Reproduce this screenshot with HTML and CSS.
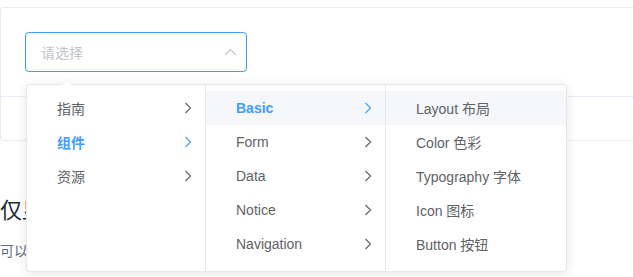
FILE: index.html
```
<!DOCTYPE html>
<html lang="zh-CN">
<head>
    <meta charset="UTF-8">
    <title>Cascader 级联选择器</title>
    <link rel="stylesheet" href="styles.css">
</head>
<body>
    <div class="page">
        <div class="demo-block">
            <div class="source">
                <div class="cascader">
                    <div class="cascader-input">
                        <span class="placeholder">请选择</span>
                        <svg class="caret" width="14" height="14" viewBox="0 0 14 14">
                            <path d="M2 10 L7.5 4.5 L13 10" fill="none" stroke="currentColor" stroke-width="1.1"/>
                        </svg>
                    </div>

                    <!-- dropdown panel -->
                    <div class="cascader-panel">
                        <span class="popper-arrow"></span>

                        <ul class="cascader-menu">
                            <li class="node"><span class="label">指南</span><svg class="postfix" width="14" height="14" viewBox="0 0 14 14"><path d="M4.5 2 L9.5 7 L4.5 12" fill="none" stroke="currentColor" stroke-width="1.1"/></svg></li>
                            <li class="node in-path"><span class="label">组件</span><svg class="postfix" width="14" height="14" viewBox="0 0 14 14"><path d="M4.5 2 L9.5 7 L4.5 12" fill="none" stroke="currentColor" stroke-width="1.1"/></svg></li>
                            <li class="node"><span class="label">资源</span><svg class="postfix" width="14" height="14" viewBox="0 0 14 14"><path d="M4.5 2 L9.5 7 L4.5 12" fill="none" stroke="currentColor" stroke-width="1.1"/></svg></li>
                        </ul>

                        <ul class="cascader-menu">
                            <li class="node in-path hovered"><span class="label">Basic</span><svg class="postfix" width="14" height="14" viewBox="0 0 14 14"><path d="M4.5 2 L9.5 7 L4.5 12" fill="none" stroke="currentColor" stroke-width="1.1"/></svg></li>
                            <li class="node"><span class="label">Form</span><svg class="postfix" width="14" height="14" viewBox="0 0 14 14"><path d="M4.5 2 L9.5 7 L4.5 12" fill="none" stroke="currentColor" stroke-width="1.1"/></svg></li>
                            <li class="node"><span class="label">Data</span><svg class="postfix" width="14" height="14" viewBox="0 0 14 14"><path d="M4.5 2 L9.5 7 L4.5 12" fill="none" stroke="currentColor" stroke-width="1.1"/></svg></li>
                            <li class="node"><span class="label">Notice</span><svg class="postfix" width="14" height="14" viewBox="0 0 14 14"><path d="M4.5 2 L9.5 7 L4.5 12" fill="none" stroke="currentColor" stroke-width="1.1"/></svg></li>
                            <li class="node"><span class="label">Navigation</span><svg class="postfix" width="14" height="14" viewBox="0 0 14 14"><path d="M4.5 2 L9.5 7 L4.5 12" fill="none" stroke="currentColor" stroke-width="1.1"/></svg></li>
                        </ul>

                        <ul class="cascader-menu">
                            <li class="node hovered"><span class="label">Layout 布局</span></li>
                            <li class="node"><span class="label">Color 色彩</span></li>
                            <li class="node"><span class="label">Typography 字体</span></li>
                            <li class="node"><span class="label">Icon 图标</span></li>
                            <li class="node"><span class="label">Button 按钮</span></li>
                        </ul>
                    </div>
                </div>
            </div>
            <div class="demo-control"></div>
        </div>

        <h3>仅显示最后一级</h3>
        <p>可以仅在输入框中显示选中项最后一级的标签，而不是选中项所在的完整路径。</p>
    </div>
</body>
</html>
```

FILE: styles.css
```
html,
body {
    height: 100%;
}
body {
    margin: 0;
    overflow: hidden;
    font-family: 'Liberation Sans', 'Noto Sans CJK SC', sans-serif;
    font-size: 14px;
    color: #606266;
    background-color: #ffffff;
}
.page {
    min-height: 277px;
    padding-top: 7px;
    box-sizing: border-box;
}
.demo-block {
    margin-right: -20px;
    border: 1px solid #ebebeb;
    border-radius: 3px;
}
.source {
    padding: 24px;
}
.demo-control {
    height: 43px;
    border-top: 1px solid #eaeefb;
}
.cascader {
    position: relative;
    width: 222px;
}
.cascader-input {
    display: flex;
    align-items: center;
    box-sizing: border-box;
    height: 40px;
    padding: 0 9px 0 15px;
    border: 1px solid #409eff;
    border-radius: 4px;
}
.placeholder {
    flex: 1;
    color: #c0c4cc;
}
.caret {
    color: #c0c4cc;
}
/* dropdown sits over the content below */
.cascader-panel {
    position: absolute;
    top: 52px;
    left: 1px;
    z-index: 10;
    display: flex;
    background-color: #ffffff;
    border: 1px solid #e4e7ed;
    border-radius: 4px;
    box-shadow: 0 2px 12px 0 rgba(0, 0, 0, 0.1);
}
.popper-arrow,
.popper-arrow::after {
    position: absolute;
    width: 0;
    height: 0;
    border: 6px solid transparent;
    border-top-width: 0;
}
.popper-arrow {
    top: -6px;
    left: 34px;
    border-bottom-color: #ebeef5;
}
.popper-arrow::after {
    content: "";
    top: 1px;
    left: -6px;
    border-bottom-color: #ffffff;
}
.cascader-menu {
    box-sizing: border-box;
    width: 180px;
    height: 186px;
    margin: 0;
    padding: 6px 0 0;
    list-style: none;
    border-right: 1px solid #e4e7ed;
}
.cascader-menu:first-of-type {
    width: 179px;
}
.cascader-menu:last-child {
    border-right: none;
}
.node {
    position: relative;
    display: flex;
    align-items: center;
    height: 34px;
    padding: 0 30px 0 20px;
    color: #606266;
}
.node .label {
    flex: 1;
    padding: 0 10px;
    white-space: nowrap;
}
.node.hovered {
    background-color: #f5f7fa;
}
.node.in-path {
    color: #409eff;
    font-weight: bold;
}
.postfix {
    position: absolute;
    right: 10px;
    top: 10px;
}
h3 {
    margin: 55px 0 15px;
    font-size: 22px;
    font-weight: 400;
    line-height: 30px;
    color: #1f2f3d;
}
p {
    margin: 0;
    font-size: 14px;
    line-height: 1.5em;
    color: #5e6d82;
}
```
